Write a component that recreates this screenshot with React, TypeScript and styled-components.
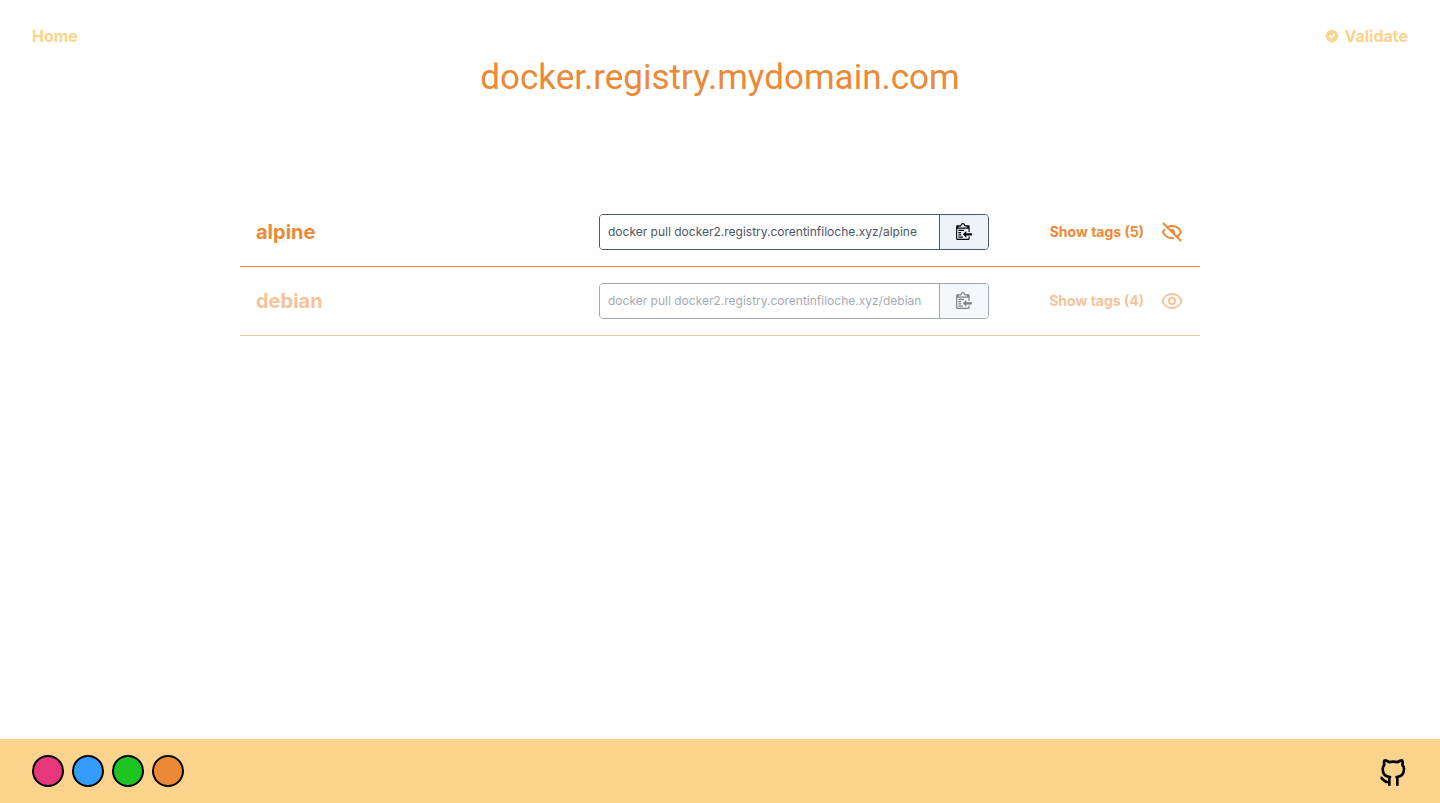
import React, { useState } from "react";
import styled, { createGlobalStyle } from "styled-components";
import { HiBadgeCheck, HiOutlineEye } from "react-icons/hi";
import { BiHide } from "react-icons/bi";

const colors = {
  accent: "#ed8936",
  accentDimmed: "#f6c49b",
  soft: "#fbd38d",
  text: "#4a5568",
  panel: "#edf2f7",
};

const GlobalStyle = createGlobalStyle`
  *, *::before, *::after { box-sizing: border-box; }
  body {
    margin: 0;
    background: #fff;
    font-family: Inter, "Liberation Sans", sans-serif;
    font-size: 16px;
    line-height: 24px;
  }
  h1, h2 { margin: 0; }
  button, input { font: inherit; }
  button { cursor: pointer; }
`;

const Page = styled.div`
  display: flex;
  flex-direction: column;
  min-height: 100vh;
`;

const Header = styled.header`
  padding: 24px 32px 0;
`;

const Nav = styled.nav`
  display: flex;
  justify-content: space-between;
`;

const NavLink = styled.a`
  display: inline-flex;
  align-items: center;
  gap: 4px;
  color: ${colors.soft};
  font-weight: 700;
  text-decoration: none;
`;

const Title = styled.h1`
  padding-top: 6px;
  color: ${colors.accent};
  font-family: Roboto, Inter, sans-serif;
  font-size: 35px;
  font-weight: 400;
  line-height: 48px;
  text-align: center;
`;

const Main = styled.main`
  flex: 1;
  width: 100%;
  max-width: 960px;
  margin: 0 auto;
  padding: 96px 0 32px;
`;

const ImageList = styled.ul`
  margin: 0;
  padding: 0;
  list-style: none;
`;

const ImageRow = styled.li<{ $dimmed: boolean }>`
  display: grid;
  grid-template-columns: 1fr 390px 195px;
  align-items: center;
  padding: 16px;
  border-bottom: 1px solid ${({ $dimmed }) => ($dimmed ? colors.accentDimmed : colors.accent)};
  color: ${colors.accent};

  & > * {
    opacity: ${({ $dimmed }) => ($dimmed ? 0.5 : 1)};
  }
`;

const ImageName = styled.h2`
  font-size: 20px;
  font-weight: 700;
  line-height: 28px;
`;

const CommandGroup = styled.div`
  display: flex;
  height: 36px;
  border: 1px solid ${colors.text};
  border-radius: 4px;
  overflow: hidden;
`;

const CommandInput = styled.input`
  flex: 1;
  min-width: 0;
  padding: 0 8px;
  border: 0;
  outline: 0;
  background: #fff;
  color: ${colors.text};
  font-size: 12px;
`;

const CopyButton = styled.button`
  display: flex;
  align-items: center;
  justify-content: center;
  width: 49px;
  padding: 0;
  border: 0;
  border-left: 1px solid ${colors.text};
  background: ${colors.panel};
  color: #000;
`;

const TagsButton = styled.button`
  display: inline-flex;
  align-items: center;
  justify-self: end;
  gap: 16px;
  padding: 0;
  border: 0;
  background: none;
  color: inherit;
  font-size: 14px;
  font-weight: 700;
  line-height: 24px;
`;

const Footer = styled.footer`
  display: flex;
  align-items: center;
  justify-content: space-between;
  padding: 16px 32px;
  background: ${colors.soft};
`;

const Swatches = styled.div`
  display: flex;
  gap: 8px;
`;

const Swatch = styled.button<{ $color: string }>`
  width: 32px;
  height: 32px;
  padding: 0;
  border: 2px solid #000;
  border-radius: 50%;
  background: ${({ $color }) => $color};
`;

const RepoLink = styled.a`
  display: flex;
  color: #000;
`;

const ClippyIcon = () => (
  <svg width="18" height="18" viewBox="0 1 14 16" fill="currentColor" aria-hidden="true">
    <path
      fillRule="evenodd"
      d="M2 13h4v1H2v-1zm5-6H2v1h5V7zm2 3V8l-3 3 3 3v-2h5v-2H9zM4.5 9H2v1h2.5V9zM2 12h2.5v-1H2v1zm9 1h1v2c-.02.28-.11.52-.3.7-.19.18-.42.28-.7.3H1c-.55 0-1-.45-1-1V4c0-.55.45-1 1-1h3c0-1.11.89-2 2-2 1.11 0 2 .89 2 2h3c.55 0 1 .45 1 1v5h-1V6H1v9h10v-2zM2 5h8c0-.55-.45-1-1-1H8c-.55 0-1-.45-1-1s-.45-1-1-1-1 .45-1 1-.45 1-1 1H3c-.55 0-1 .45-1 1z"
    />
  </svg>
);

const GithubIcon = () => (
  <svg
    width="32"
    height="32"
    viewBox="-1 -1 24 24"
    fill="none"
    stroke="currentColor"
    strokeWidth="2"
    strokeLinejoin="round"
    aria-hidden="true"
  >
    <path d="M9 19c-4.3 1.4-4.3-2.5-6.6-3M15 22v-4.5c0-1 .1-1.4-.5-2 2.8-.3 5.5-1.4 5.5-6a4.6 4.6 0 0 0-1.3-3.2 4.2 4.2 0 0 0-.1-3.2s-1.1-.3-3.5 1.3a12.3 12.3 0 0 0-6.2 0c-2.4-1.6-3.5-1.3-3.5-1.3a4.2 4.2 0 0 0-.1 3.2 4.6 4.6 0 0 0-1.3 3.2c0 4.6 2.7 5.7 5.5 6-.6.6-.6 1.2-.5 2V22" />
  </svg>
);

const images = [
  { name: "alpine", tags: 5, dimmed: false },
  { name: "debian", tags: 4, dimmed: true },
];

const themes = [
  { name: "Pink", color: "#e53779" },
  { name: "Blue", color: "#339dfb" },
  { name: "Green", color: "#1ec421" },
  { name: "Orange", color: "#ed8936" },
];

export default function App() {
  const [, setTheme] = useState("Orange");
  return (
    <>
      <GlobalStyle />
      <Page>
        <Header>
          <Nav>
            <NavLink href="#home">Home</NavLink>
            <NavLink href="#validate">
              <HiBadgeCheck size={16} aria-hidden="true" />
              Validate
            </NavLink>
          </Nav>
          <Title>docker.registry.mydomain.com</Title>
        </Header>
        <Main>
          <ImageList>
            {images.map(({ name, tags, dimmed }) => (
              <ImageRow key={name} $dimmed={dimmed}>
                <ImageName>{name}</ImageName>
                <CommandGroup>
                  <CommandInput
                    readOnly
                    aria-label={`Pull command for ${name}`}
                    value={`docker pull docker2.registry.corentinfiloche.xyz/${name}`}
                  />
                  <CopyButton type="button" aria-label={`Copy pull command for ${name}`}>
                    <ClippyIcon />
                  </CopyButton>
                </CommandGroup>
                <TagsButton type="button">
                  Show tags ({tags})
                  {dimmed ? <HiOutlineEye size={24} aria-hidden="true" /> : <BiHide size={24} aria-hidden="true" />}
                </TagsButton>
              </ImageRow>
            ))}
          </ImageList>
        </Main>
        <Footer>
          <Swatches>
            {themes.map(({ name, color }) => (
              <Swatch
                key={name}
                type="button"
                $color={color}
                aria-label={`${name} theme`}
                onClick={() => setTheme(name)}
              />
            ))}
          </Swatches>
          <RepoLink href="#github" aria-label="GitHub repository">
            <GithubIcon />
          </RepoLink>
        </Footer>
      </Page>
    </>
  );
}
